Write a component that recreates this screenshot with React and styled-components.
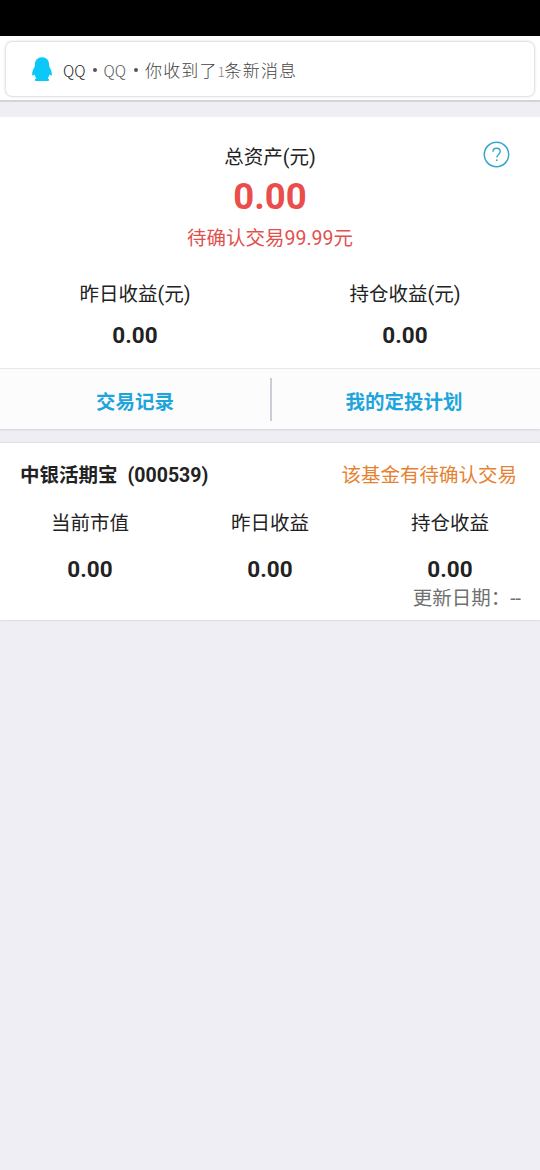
/* eslint-disable react/prop-types */
import styled, { createGlobalStyle } from "styled-components";

const summary = [
  { label: "昨日收益(元)", value: "0.00" },
  { label: "持仓收益(元)", value: "0.00" },
];

const fund = {
  name: "中银活期宝",
  code: "(000539)",
  notice: "该基金有待确认交易",
  updated: "--",
  figures: [
    { label: "当前市值", value: "0.00" },
    { label: "昨日收益", value: "0.00" },
    { label: "持仓收益", value: "0.00" },
  ],
};

function PenguinIcon() {
  return (
    <svg width="20" height="25" viewBox="0 0 20 25" fill="#0cc8f8">
      <path d="M10 .3C5.600.3 3 3.200 2.900 7.600c0 1-.1 1.700-.4 2.400C1.200 12.400.1 14.800.1 17.200c0 .9.3 1.400.7 1.400.6 0 1.200-.4 1.800-1 .3 1.500.9 2.900 1.700 4-.9.300-1.500.7-1.500 1.300 0 .8.800 1.100 2.200 1.100h10c1.400 0 2.200-.3 2.200-1.100 0-.6-.6-1-1.500-1.300.8-1.100 1.400-2.500 1.700-4 .6.6 1.200 1 1.800 1 .4 0 .7-.5.7-1.400 0-2.400-1.100-4.800-2.400-7.200-.3-.7-.4-1.400-.4-2.400C17 3.200 14.400.3 10 .3z" />
    </svg>
  );
}

function HelpIcon() {
  return (
    <svg width="27" height="27" viewBox="0 0 27 27" fill="none" stroke="#35a6cc">
      <circle cx="13.500" cy="13.500" r="12.200" strokeWidth="1.500" />
      <path d="M10 10.700c0-2.200 1.500-3.500 3.600-3.500s3.600 1.300 3.600 3.300c0 2.800-3.300 3.200-3.300 6" strokeWidth="1.400" />
      <circle cx="13.800" cy="19.200" r=".9" fill="#35a6cc" stroke="none" />
    </svg>
  );
}

function Figure({ label, value, gap }) {
  return (
    <FigureBox $gap={gap}>
      <Label>{label}</Label>
      <Value>{value}</Value>
    </FigureBox>
  );
}

function Notification() {
  return (
    <NotificationArea>
      <NotificationCard>
        <PenguinIcon />
        <NotificationText>
          <Sender>QQ</Sender>
          <Dot />
          <Sender $light>QQ</Sender>
          <Dot />
          <Message>
            你收到了<Count>1</Count>条新消息
          </Message>
        </NotificationText>
      </NotificationCard>
    </NotificationArea>
  );
}

function App() {
  return (
    <>
      <GlobalStyle />
      <Page>
        <StatusBar />
        <Notification />
        <AssetPanel>
          <AssetHeader>
            <Side />
            <Total>
              <Label>总资产(元)</Label>
              <TotalValue>0.00</TotalValue>
              <Pending>待确认交易99.99元</Pending>
            </Total>
            <Side>
              <HelpButton aria-label="help">
                <HelpIcon />
              </HelpButton>
            </Side>
          </AssetHeader>
          <Columns $count={2}>
            {summary.map((item) => (
              <Figure key={item.label} gap={11} {...item} />
            ))}
          </Columns>
        </AssetPanel>
        <Actions>
          <Action>交易记录</Action>
          <Action $divided>我的定投计划</Action>
        </Actions>
        <FundCard>
          <FundHeader>
            <FundName>
              {fund.name}
              <span>{fund.code}</span>
            </FundName>
            <FundNotice>{fund.notice}</FundNotice>
          </FundHeader>
          <Columns $count={3}>
            {fund.figures.map((item) => (
              <Figure key={item.label} gap={16} {...item} />
            ))}
          </Columns>
          <Updated>更新日期：{fund.updated}</Updated>
        </FundCard>
      </Page>
    </>
  );
}

const GlobalStyle = createGlobalStyle`
  * {
    box-sizing: border-box;
  }
  body {
    margin: 0;
    background: #eeeef4;
    font-family: Roboto, "Noto Sans CJK SC", sans-serif;
    font-size: 19.5px;
    color: #222;
  }
`;

const Page = styled.div`
  display: flex;
  flex-direction: column;
  width: 540px;
  height: 1170px;
  background: #eeeef4;
`;

const StatusBar = styled.div`
  height: 36px;
  background: #000;
`;

const NotificationArea = styled.div`
  height: 66px;
  padding: 6px 6px 4px;
  background: #fff;
  border-bottom: 2px solid #d3d3d8;
`;

const NotificationCard = styled.div`
  display: flex;
  align-items: center;
  height: 54px;
  padding-left: 26px;
  border-radius: 6px;
  background: #fff;
  box-shadow: 0 0 3px rgba(0, 0, 0, 0.3);
`;

const NotificationText = styled.div`
  display: flex;
  align-items: center;
  margin: 2px 0 0 11px;
  line-height: 24px;
  font-family: "Noto Sans CJK SC", sans-serif;
  font-weight: 300;
`;

const Sender = styled.span`
  width: 23px;
  font-size: 15.5px;
  color: ${({ $light }) => ($light ? "#555" : "#1c1c1c")};
`;

const Dot = styled.span`
  width: 4px;
  height: 4px;
  margin: 0 6.5px 0 7px;
  border-radius: 50%;
  background: #555;
`;

const Message = styled.span`
  margin-left: 1px;
  font-size: 17px;
  letter-spacing: 1.15px;
  color: #444;
`;

const Count = styled.span`
  display: inline-block;
  width: 7px;
  font-size: 14px;
  letter-spacing: 0;
  color: #888;
`;

const AssetPanel = styled.section`
  height: 251px;
  margin-top: 15px;
  padding-top: 25px;
  background: #fff;
`;

const AssetHeader = styled.div`
  display: flex;
  justify-content: space-between;
  height: 139px;
`;

const Side = styled.div`
  display: flex;
  justify-content: flex-end;
  align-items: flex-start;
  width: 100px;
  padding-right: 30px;
`;

const Total = styled.div`
  display: flex;
  flex-direction: column;
  align-items: center;
  padding-top: 2px;
`;

const Label = styled.div`
  line-height: 28px;
`;

const TotalValue = styled.div`
  line-height: 50px;
  font-size: 36.5px;
  font-weight: 700;
  color: #ea4e4c;
`;

const Pending = styled.div`
  line-height: 34px;
  color: #e2504e;
`;

const HelpButton = styled.button`
  display: flex;
  margin-top: -1px;
  padding: 0;
  border: 0;
  background: none;
`;

const Columns = styled.div`
  display: grid;
  grid-template-columns: repeat(${({ $count }) => $count}, 1fr);
`;

const FigureBox = styled.div`
  display: flex;
  flex-direction: column;
  align-items: center;
  gap: ${({ $gap }) => $gap}px;
`;

const Value = styled.div`
  line-height: 30px;
  font-size: 22.5px;
  font-weight: 700;
`;

const Actions = styled.div`
  display: grid;
  grid-template-columns: 1fr 1fr;
  align-items: center;
  height: 61px;
  border-top: 1px solid #e8e8ea;
  background: #fcfcfd;
  box-shadow: 0 1px 2px rgba(0, 0, 0, 0.12);
`;

const Action = styled.a`
  height: 43px;
  padding-top: 3px;
  padding-right: ${({ $divided }) => ($divided ? 4 : 2)}px;
  border-left: 2px solid ${({ $divided }) => ($divided ? "#ccccd6" : "transparent")};
  text-align: center;
  line-height: 44px;
  font-weight: 700;
  color: #1ea5dc;
`;

const FundCard = styled.section`
  height: 177px;
  margin-top: 14px;
  padding-top: 19px;
  background: #fff;
  box-shadow: 0 0 2px rgba(0, 0, 0, 0.2);
`;

const FundHeader = styled.div`
  display: flex;
  justify-content: space-between;
  height: 48px;
  padding: 0 23px 0 20px;
  line-height: 28px;
`;

const FundName = styled.div`
  font-weight: 700;
  span {
    margin-left: 10px;
  }
`;

const FundNotice = styled.div`
  color: #e58232;
`;

const Updated = styled.div`
  padding-right: 19px;
  text-align: right;
  line-height: 30px;
  color: #707070;
`;

export default App;
